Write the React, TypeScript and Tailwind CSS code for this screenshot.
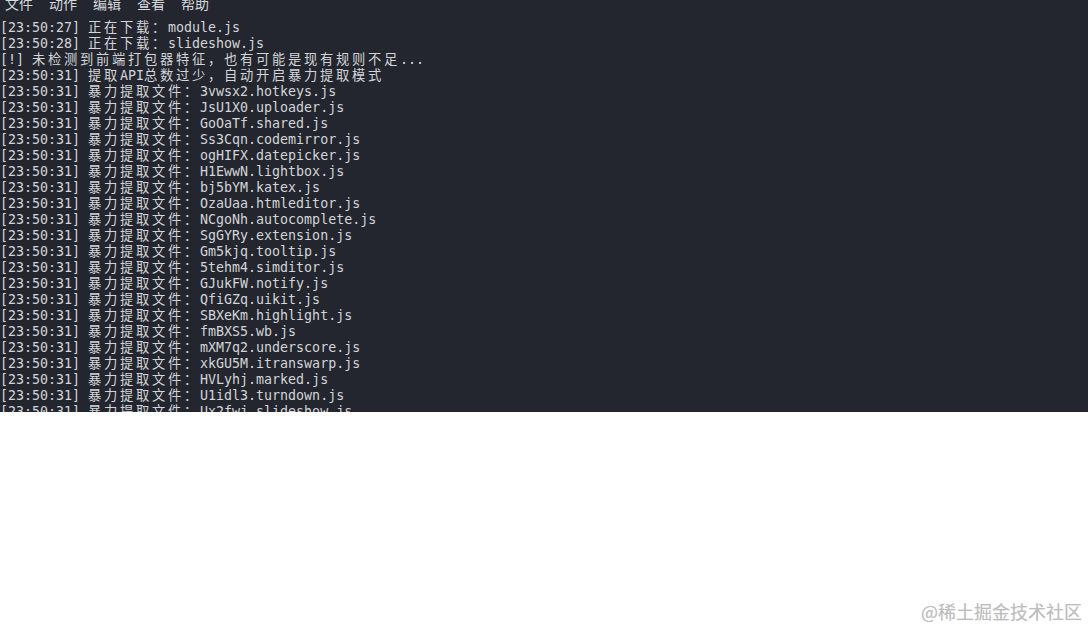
import React from "react";

const lines: string[] = [
  "[23:50:27] 正在下载：module.js",
  "[23:50:28] 正在下载：slideshow.js",
  "[!] 未检测到前端打包器特征，也有可能是现有规则不足...",
  "[23:50:31] 提取API总数过少，自动开启暴力提取模式",
  ...[
    "3vwsx2.hotkeys.js",
    "JsU1X0.uploader.js",
    "GoOaTf.shared.js",
    "Ss3Cqn.codemirror.js",
    "ogHIFX.datepicker.js",
    "H1EwwN.lightbox.js",
    "bj5bYM.katex.js",
    "OzaUaa.htmleditor.js",
    "NCgoNh.autocomplete.js",
    "SgGYRy.extension.js",
    "Gm5kjq.tooltip.js",
    "5tehm4.simditor.js",
    "GJukFW.notify.js",
    "QfiGZq.uikit.js",
    "SBXeKm.highlight.js",
    "fmBXS5.wb.js",
    "mXM7q2.underscore.js",
    "xkGU5M.itranswarp.js",
    "HVLyhj.marked.js",
    "U1idl3.turndown.js",
    "Ux2fwj.slideshow.js",
  ].map((f) => `[23:50:31] 暴力提取文件：${f}`),
];

function splitRuns(s: string) {
  const runs: { wide: boolean; text: string }[] = [];
  for (const ch of s) {
    const wide = ch.charCodeAt(0) > 0x2000;
    const last = runs[runs.length - 1];
    if (last && last.wide === wide) last.text += ch;
    else runs.push({ wide, text: ch });
  }
  return runs;
}

function Line({ text }: { text: string }) {
  return (
    <div className="h-4 leading-4 whitespace-pre">
      {splitRuns(text).map((r, i) =>
        r.wide ? (
          <span
            key={i}
            className="tracking-[2.7px] text-[13.3px] [font-family:'Noto_Sans_CJK_SC','DejaVu_Sans_Mono',monospace]"
          >
            {r.text}
          </span>
        ) : (
          <span key={i}>{r.text}</span>
        )
      )}
    </div>
  );
}

export default function App() {
  return (
    <div className="w-[1088px] h-[628px] bg-white flex flex-col overflow-hidden">
      <div className="h-[412px] bg-[#23262e] flex flex-col overflow-hidden shrink-0">
        <div className="h-[19px] overflow-hidden shrink-0 flex items-start pl-[5px] gap-[16px] text-[14px] leading-[14px] text-[#d6d8dc] [font-family:'Noto_Sans_CJK_SC','Noto_Sans',sans-serif]">
          {["文件", "动作", "编辑", "查看", "帮助"].map((m) => (
            <span key={m} className="-mt-[4px] shrink-0 whitespace-nowrap">
              {m}
            </span>
          ))}
        </div>
        <div className="text-[13.3px] text-[#d3d5d9] [font-family:'DejaVu_Sans_Mono',monospace]">
          {lines.map((l, i) => (
            <Line key={i} text={l} />
          ))}
        </div>
      </div>
      <div className="flex-1 flex items-end justify-end pr-[6px] pb-[4px]">
        <span className="text-[18px] leading-[26px] text-[#bdbdbd] [font-family:'Noto_Sans_CJK_SC',sans-serif] [text-shadow:0_0_1px_#e0e0e0]">
          @稀土掘金技术社区
        </span>
      </div>
    </div>
  );
}
